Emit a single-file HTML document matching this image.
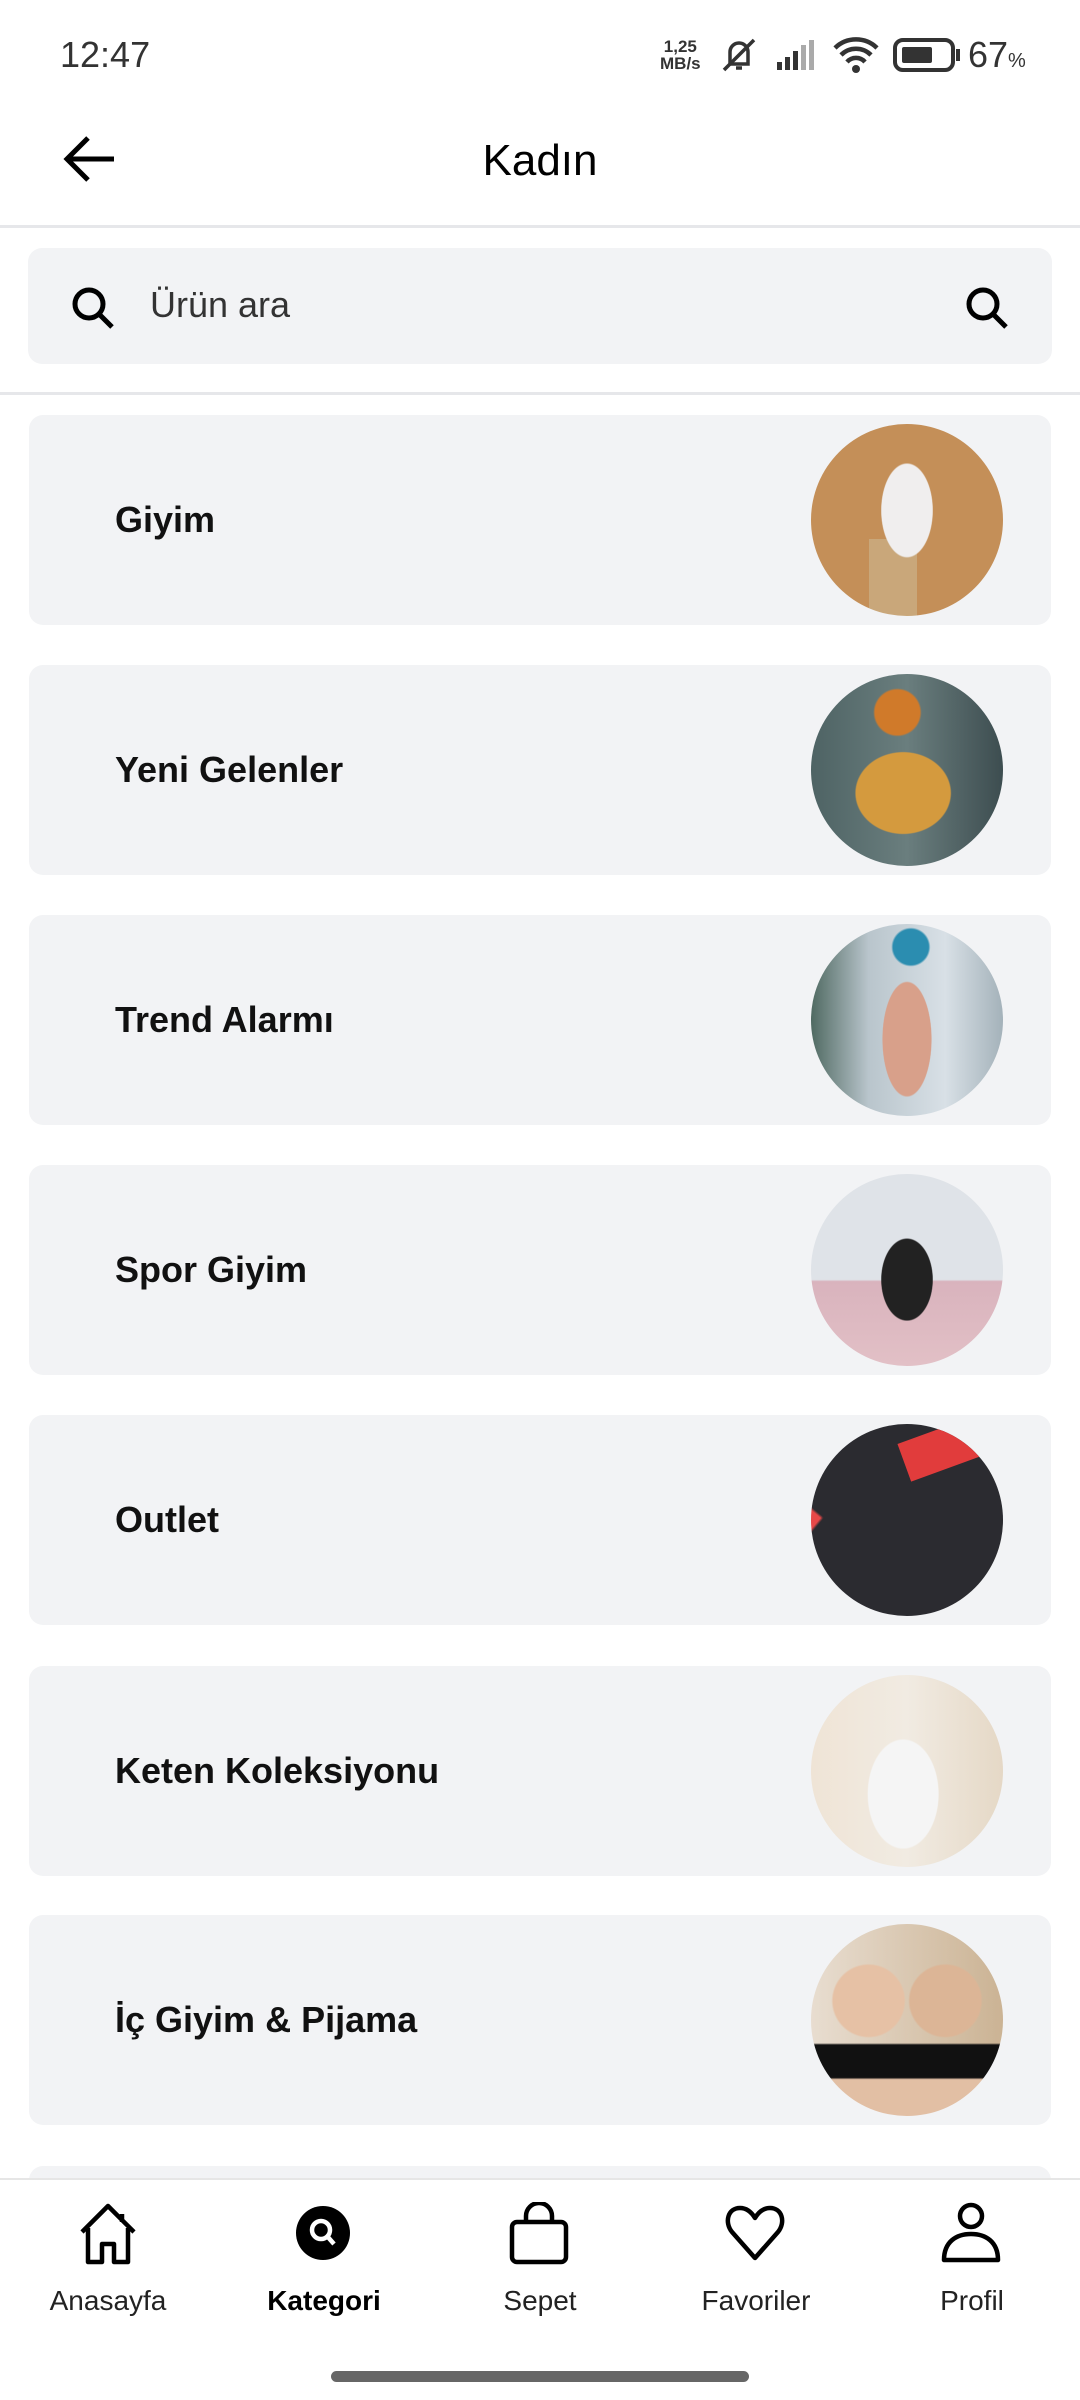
<!DOCTYPE html>
<html><head><meta charset="utf-8"><style>
*{margin:0;padding:0;box-sizing:border-box}
body{width:1080px;height:2400px;background:#fff;font-family:"Liberation Sans",Roboto,sans-serif;position:relative;overflow:hidden;color:#000}
.abs{position:absolute}
.card{position:absolute;left:29px;width:1022px;height:210px;background:#f2f3f5;border-radius:14px}
.card .t{position:absolute;left:86px;top:0;line-height:210px;font-size:36px;font-weight:bold;color:#111}
.card .c{position:absolute;left:782px;top:9px;width:192px;height:192px;border-radius:50%;overflow:hidden}
.nav{position:absolute;top:2178px;left:0;width:1080px;height:222px;background:#fff;border-top:2px solid #e6e6e6}
.ni{position:absolute;width:216px;text-align:center;top:105px;font-size:28px;color:#222}
</style></head><body>
<div class="abs" style="left:60px;top:34px;font-size:36px;color:#333">12:47</div>
<div class="abs" style="left:660px;top:38px;font-size:17px;line-height:17px;font-weight:bold;color:#333;text-align:center">1,25<br>MB/s</div>
<svg class="abs" style="left:716px;top:34px" width="46" height="42" viewBox="0 0 46 42"><path d="M14 30 V18 a9 9 0 0 1 18 0 V30 Z M20 34 h6" stroke="#333" stroke-width="3.5" fill="none"/><path d="M8 36 L38 6" stroke="#333" stroke-width="3.5"/></svg>
<svg class="abs" style="left:775px;top:38px" width="46" height="34"><rect x="2" y="24" width="5" height="8" fill="#333"/><rect x="10" y="19" width="5" height="13" fill="#333"/><rect x="18" y="13" width="5" height="19" fill="#333"/><rect x="26" y="7" width="5" height="25" fill="#aaa"/><rect x="34" y="2" width="5" height="30" fill="#aaa"/></svg>
<svg class="abs" style="left:832px;top:36px" width="48" height="40" viewBox="0 0 48 40"><path d="M3 12 a30 30 0 0 1 42 0 M9 19 a21 21 0 0 1 30 0 M15 26 a12 12 0 0 1 18 0" stroke="#333" stroke-width="4.5" fill="none"/><circle cx="24" cy="33" r="4" fill="#333"/></svg>
<svg class="abs" style="left:893px;top:38px" width="70" height="34"><rect x="2" y="2" width="58" height="30" rx="8" fill="none" stroke="#333" stroke-width="4"/><rect x="9" y="9" width="30" height="16" rx="2" fill="#333"/><rect x="63" y="11" width="4" height="12" fill="#333"/></svg>
<div class="abs" style="left:968px;top:34px;font-size:36px;color:#333">67<span style="font-size:20px">%</span></div>

<svg class="abs" style="left:62px;top:134px" width="56" height="50" viewBox="0 0 56 50"><path d="M52 25 H6 M26 4 L5 25 L26 46" stroke="#000" stroke-width="5" fill="none"/></svg>
<div class="abs" style="left:0;width:1080px;top:136px;text-align:center;font-size:44px">Kadın</div>
<div class="abs" style="left:0;top:225px;width:1080px;height:3px;background:#e6e7ea"></div>

<div class="abs" style="left:28px;top:248px;width:1024px;height:116px;background:#f2f3f5;border-radius:14px"></div>
<svg class="abs" style="left:68px;top:283px" width="50" height="50" viewBox="0 0 50 50"><circle cx="21" cy="21" r="14" stroke="#000" stroke-width="5" fill="none"/><path d="M31 31 L44 44" stroke="#000" stroke-width="5"/></svg>
<div class="abs" style="left:150px;top:284px;font-size:36px;color:#333">Ürün ara</div>
<svg class="abs" style="left:962px;top:283px" width="50" height="50" viewBox="0 0 50 50"><circle cx="21" cy="21" r="14" stroke="#000" stroke-width="5" fill="none"/><path d="M31 31 L44 44" stroke="#000" stroke-width="5"/></svg>
<div class="abs" style="left:0;top:392px;width:1080px;height:3px;background:#e6e7ea"></div>

<div class="card" style="top:415px"><div class="t">Giyim</div><div class="c" style="background:radial-gradient(ellipse 22% 40% at 50% 45%,#f0eeee 60%,transparent 62%),linear-gradient(180deg,transparent 60%,#c9a77a 60%) no-repeat 40% 0/25% 100%,#c48f58"></div></div>
<div class="card" style="top:665px"><div class="t">Yeni Gelenler</div><div class="c" style="background:radial-gradient(ellipse 35% 30% at 48% 62%,#d49a3e 70%,transparent 72%),radial-gradient(circle at 45% 20%,#d07a2a 12%,transparent 13%),linear-gradient(90deg,#4e6364,#6a7e7e,#3d4d50)"></div></div>
<div class="card" style="top:915px"><div class="t">Trend Alarmı</div><div class="c" style="background:radial-gradient(ellipse 18% 42% at 50% 60%,#d8a08a 70%,transparent 72%),radial-gradient(circle at 52% 12%,#2b8db0 9%,transparent 10%),linear-gradient(90deg,#506a62 0,#b9c5cc 30%,#d8e0e6 70%,#a4b2ba)"></div></div>
<div class="card" style="top:1165px"><div class="t">Spor Giyim</div><div class="c" style="background:radial-gradient(ellipse 22% 35% at 50% 55%,#222 60%,transparent 62%),linear-gradient(180deg,#dfe3e8 0,#dfe3e8 55%,#d9b3bd 56%,#e2c0c6)"></div></div>
<div class="card" style="top:1415px"><div class="t">Outlet</div><div class="c" style="background:linear-gradient(130deg,transparent 25%,#2b2b30 26%),linear-gradient(40deg,#e84848 30%,#2b2b30 31%)"><div style="position:absolute;left:90px;top:0;width:110px;height:40px;background:#e13c3c;transform:rotate(-20deg)"></div></div></div>
<div class="card" style="top:1666px"><div class="t">Keten Koleksiyonu</div><div class="c" style="background:radial-gradient(ellipse 26% 40% at 48% 62%,#f5f5f5 70%,transparent 72%),linear-gradient(90deg,#efe4d6,#f1ebe2 50%,#e5d8c6)"></div></div>
<div class="card" style="top:1915px"><div class="t">İç Giyim &amp; Pijama</div><div class="c" style="background:linear-gradient(180deg,transparent 62%,#111 63%,#111 80%,#e2bfa4 81%),radial-gradient(circle at 30% 40%,#e6c1a5 20%,transparent 21%),radial-gradient(circle at 70% 40%,#dcb596 20%,transparent 21%),linear-gradient(90deg,#e8ddd0,#cbb394)"></div></div>
<div class="card" style="top:2166px"></div>

<div class="nav">
<svg class="abs" style="left:76px;top:22px" width="64" height="64" viewBox="0 0 64 64"><path d="M6 30 L32 4 L58 30 M12 26 V60 H26 V42 H38 V60 H52 V26 M46 12 V20" stroke="#000" stroke-width="4.5" fill="none" stroke-linejoin="round"/></svg>
<svg class="abs" style="left:294px;top:24px" width="58" height="58" viewBox="0 0 58 58"><circle cx="29" cy="29" r="27" fill="#000"/><circle cx="27" cy="26" r="9" stroke="#fff" stroke-width="4.5" fill="none"/><path d="M33 32 L40 40" stroke="#fff" stroke-width="4.5"/></svg>
<svg class="abs" style="left:508px;top:22px" width="62" height="64" viewBox="0 0 62 64"><rect x="4" y="20" width="54" height="40" rx="5" stroke="#000" stroke-width="4.5" fill="none"/><path d="M18 20 V14 a13 13 0 0 1 26 0 V20" stroke="#000" stroke-width="4.5" fill="none"/></svg>
<svg class="abs" style="left:724px;top:24px" width="62" height="58" viewBox="0 0 62 58"><path d="M31 54 L8 28 C0 18 4 4 16 4 C23 4 28 9 31 14 C34 9 39 4 46 4 C58 4 62 18 54 28 Z" stroke="#000" stroke-width="4.5" fill="none" stroke-linejoin="round"/></svg>
<svg class="abs" style="left:940px;top:20px" width="62" height="66" viewBox="0 0 62 66"><circle cx="31" cy="16" r="11" stroke="#000" stroke-width="4.5" fill="none"/><path d="M4 60 C4 42 16 34 31 34 C46 34 58 42 58 60 Z" stroke="#000" stroke-width="4.5" fill="none" stroke-linejoin="round"/></svg>
<div class="ni" style="left:0">Anasayfa</div>
<div class="ni" style="left:216px;font-weight:bold;color:#000">Kategori</div>
<div class="ni" style="left:432px">Sepet</div>
<div class="ni" style="left:648px">Favoriler</div>
<div class="ni" style="left:864px">Profil</div>
</div>
<div class="abs" style="left:331px;top:2371px;width:418px;height:11px;border-radius:6px;background:#666"></div>
</body></html>
